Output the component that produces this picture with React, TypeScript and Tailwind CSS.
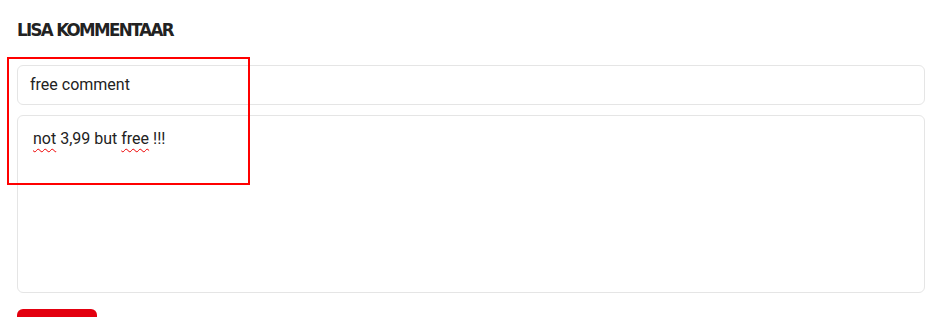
import React from 'react';

const App: React.FC = () => {
  return (
    <div className="relative w-[950px] h-[317px] overflow-hidden bg-white" style={{ fontFamily: 'Roboto, "Liberation Sans", sans-serif' }}>
      <div className="pl-[17px] pr-[25px] pt-[19px]">
        <h2
          className="text-[18.5px] leading-[22px] font-bold uppercase text-[#222] tracking-[-1.65px]"
          style={{ fontFamily: '"DejaVu Sans Condensed", "DejaVu Sans", sans-serif' }}
        >
          Lisa kommentaar
        </h2>

        <div className="mt-[24px] flex flex-col gap-[10px]">
          <div className="h-[40px] flex items-center px-[12px] border border-[#e5e5e5] rounded-[6px] text-[16px] text-[#222]">
            free comment
          </div>
          <div className="h-[178px] px-[15px] pt-[11px] border border-[#e5e5e5] rounded-[6px] text-[16px] leading-[24px] text-[#222]">
            <span className="underline decoration-wavy decoration-[#e00] decoration-[1.3px] underline-offset-[4px]">not</span> 3,99 but{' '}
            <span className="underline decoration-wavy decoration-[#e00] decoration-[1.3px] underline-offset-[4px]">free</span> !!!
          </div>
        </div>

        <div className="mt-[16px] w-[80px] h-[20px] bg-[#e3000f] rounded-t-[6px]" />
      </div>

      {/* annotation frame */}
      <div className="absolute left-[7px] top-[57px] w-[243px] h-[128px] border-2 border-[#ff0000]" />
    </div>
  );
};

export default App;
